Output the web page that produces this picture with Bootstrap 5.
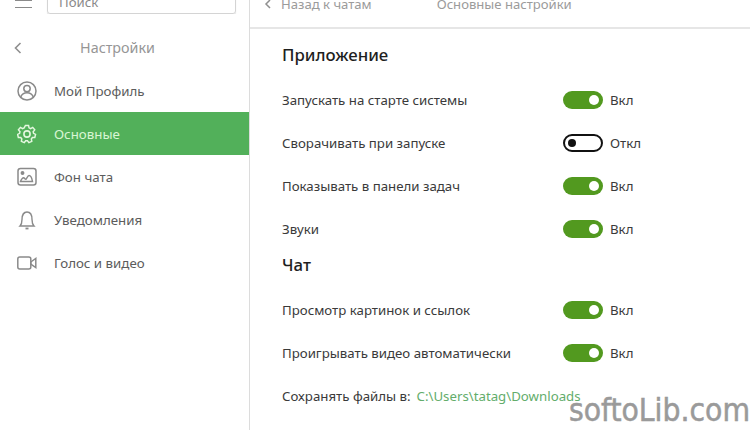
<!DOCTYPE html>
<html lang="ru">
<head>
<meta charset="utf-8">
<title>Настройки</title>
<link href="https://cdn.jsdelivr.net/npm/bootstrap@5.3.0/dist/css/bootstrap.min.css" rel="stylesheet">
<style>
html,body{width:750px;height:430px;overflow:hidden;margin:0;background:#fff;}
body{font-family:"Noto Sans","Open Sans",sans-serif;font-size:13.2px;color:#333;}
.shell{width:750px;height:430px;position:relative;overflow:hidden;}
.side{width:250px;border-right:1px solid #dcdcdc;flex:none;}
.topcut{height:14px;align-items:flex-end;overflow:hidden;padding-left:15px;}
.burger{width:18px;height:14px;margin-right:14px;flex:none;overflow:hidden;}
.searchbox{width:189px;height:24px;flex:none;border:1px solid #d4d4d4;border-radius:3px;box-shadow:0 1px 1px #ddd;padding:0 11px;line-height:22px;color:#8a8a8a;font-size:13.2px;}
.sidehead{height:55px;padding-top:13px;padding-left:13px;color:#969696;font-size:14.3px;}
.sidehead span{width:189px;text-align:center;}
.menuitem{height:43.2px;padding-left:17px;color:#5c5c5c;font-size:13.3px;gap:17px;}
.menuitem span{position:relative;top:1px;}
.menuitem svg{flex:none;width:20px;height:20px;}
.menuitem.on{background:#52b05a;color:#d9f5d4;height:43px;}
.main{flex:1;min-width:0;}
.mainhead{height:29px;border-bottom:2px solid #e6e6e6;color:#9b9b9b;font-size:13.1px;overflow:hidden;padding-left:14px;align-items:flex-start;}
.mainhead .ttl{margin-left:65px;}
.mainhead div{margin-top:-5px;}
.mainhead svg{margin-top:-1px;margin-right:9px;}
.pane{padding-left:32px;}
.sect{font-size:16.8px;font-weight:500;color:#1e1e1e;line-height:22px;}
.sect.first{margin-top:15px;margin-bottom:13px;}
.sect.next{margin-top:3px;margin-bottom:13px;}
.optrow{height:43px;color:#3a3a3a;font-size:13.25px;}
.optname{width:281px;flex:none;}
.tog{width:40px;height:18px;border-radius:9px;background:#52991f;position:relative;flex:none;margin-right:7px;margin-top:-2px;}
.tog::after{content:"";position:absolute;right:4px;top:4px;width:10px;height:10px;border-radius:50%;background:#fff;}
.tog.off{background:#fff;border:2px solid #111;}
.tog.off::after{left:3px;right:auto;top:3px;width:8px;height:8px;background:#111;}
.pathlink{color:#63ad6b;margin-left:6px;}
.wm{position:absolute;right:0;bottom:4px;font-family:"DejaVu Sans",sans-serif;font-stretch:condensed;font-size:31.5px;line-height:32px;color:#9a9a9a;-webkit-text-stroke:.5px #9a9a9a;}
</style>
</head>
<body>
<div class="shell d-flex">
  <aside class="side d-flex flex-column">
    <div class="topcut d-flex">
      <svg class="burger" viewBox="0 0 18 14"><path d="M0 0.5H17M0 7.500H17" stroke="#8a8a8a" stroke-width="1.200" fill="none"/></svg>
      <div class="searchbox">Поиск</div>
    </div>
    <div class="sidehead d-flex align-items-center">
      <svg width="10" height="14" viewBox="0 0 10 14"><path d="M7.500 2L2.500 7l5 5" stroke="#8f8f8f" stroke-width="1.600" fill="none"/></svg>
      <span>Настройки</span>
    </div>
    <div class="menuitem d-flex align-items-center">
      <svg viewBox="0 0 20 20" fill="none" stroke="#8a8a8a" stroke-width="1.500"><circle cx="10" cy="10" r="9"/><circle cx="10" cy="7.600" r="3.200"/><path d="M3.800 16c1-3 3.400-4.200 6.200-4.200s5.200 1.200 6.200 4.200"/></svg>
      <span>Мой Профиль</span>
    </div>
    <div class="menuitem on d-flex align-items-center">
      <svg viewBox="0 0 20 20" fill="none" stroke="#e4f7df" stroke-width="1.600"><path d="M8.300 1h3.400l.5 2.600 1.700.8 2.300-1.300 2.200 2.700-1.700 2 .4 1.800 2.200 1.200-.8 3.300-2.600.1-1.200 1.500.5 2.600-3.100 1.400-1.600-2.100h-1.900l-1.600 2.100-3.100-1.400.5-2.600-1.200-1.500-2.600-.1-.8-3.300 2.200-1.200.4-1.800-1.700-2 2.200-2.700 2.300 1.300 1.700-.8z" transform="translate(10 10) scale(.92) translate(-10 -10.300)"/><circle cx="10" cy="10" r="3.100"/></svg>
      <span>Основные</span>
    </div>
    <div class="menuitem d-flex align-items-center">
      <svg viewBox="0 0 20 20" fill="none" stroke="#8a8a8a" stroke-width="1.500"><rect x="1" y="1.500" width="18" height="16.500" rx="2.500"/><circle cx="5.500" cy="6" r="1.200" fill="#8a8a8a"/><path d="M3.500 14.500c1-3 2.500-4 3.500-3.500s1.200 1.500 2 1.200 1.500-3.700 3-3.700 3 3 3.500 6z"/></svg>
      <span>Фон чата</span>
    </div>
    <div class="menuitem d-flex align-items-center">
      <svg viewBox="0 0 20 20" fill="none" stroke="#8a8a8a" stroke-width="1.400"><path d="M3 16c1.500-1.500 2-3 2-6.500C5 5 7 2 10 2s5 3 5 7.500c0 3.500.5 5 2 6.500z"/><path d="M8.500 18.500h3" stroke-width="1.800"/></svg>
      <span>Уведомления</span>
    </div>
    <div class="menuitem d-flex align-items-center">
      <svg viewBox="0 0 20 20" fill="none" stroke="#8a8a8a" stroke-width="1.500"><rect x="0.800" y="4" width="13" height="12" rx="2"/><path d="M13.800 9l5-3.500v9l-5-3.500z"/></svg>
      <span>Голос и видео</span>
    </div>
  </aside>
  <main class="main d-flex flex-column">
    <div class="mainhead d-flex">
      <svg width="8" height="10" viewBox="0 0 8 10"><path d="M6 1L2 5l4 4" stroke="#8f8f8f" stroke-width="1.500" fill="none"/></svg>
      <div>Назад к чатам</div>
      <div class="ttl">Основные настройки</div>
    </div>
    <div class="pane">
      <div class="sect first">Приложение</div>
      <div class="optrow d-flex align-items-center"><span class="optname">Запускать на старте системы</span><span class="tog"></span><span>Вкл</span></div>
      <div class="optrow d-flex align-items-center"><span class="optname">Сворачивать при запуске</span><span class="tog off"></span><span>Откл</span></div>
      <div class="optrow d-flex align-items-center"><span class="optname">Показывать в панели задач</span><span class="tog"></span><span>Вкл</span></div>
      <div class="optrow d-flex align-items-center"><span class="optname">Звуки</span><span class="tog"></span><span>Вкл</span></div>
      <div class="sect next">Чат</div>
      <div class="optrow d-flex align-items-center"><span class="optname">Просмотр картинок и ссылок</span><span class="tog"></span><span>Вкл</span></div>
      <div class="optrow d-flex align-items-center"><span class="optname">Проигрывать видео автоматически</span><span class="tog"></span><span>Вкл</span></div>
      <div class="optrow d-flex align-items-center"><span>Сохранять файлы в:</span><span class="pathlink">C:\Users\tatag\Downloads</span></div>
    </div>
  </main>
  <div class="wm">softoLib.com</div>
</div>
<script src="https://cdn.jsdelivr.net/npm/bootstrap@5.3.0/dist/js/bootstrap.bundle.min.js"></script>
</body>
</html>
